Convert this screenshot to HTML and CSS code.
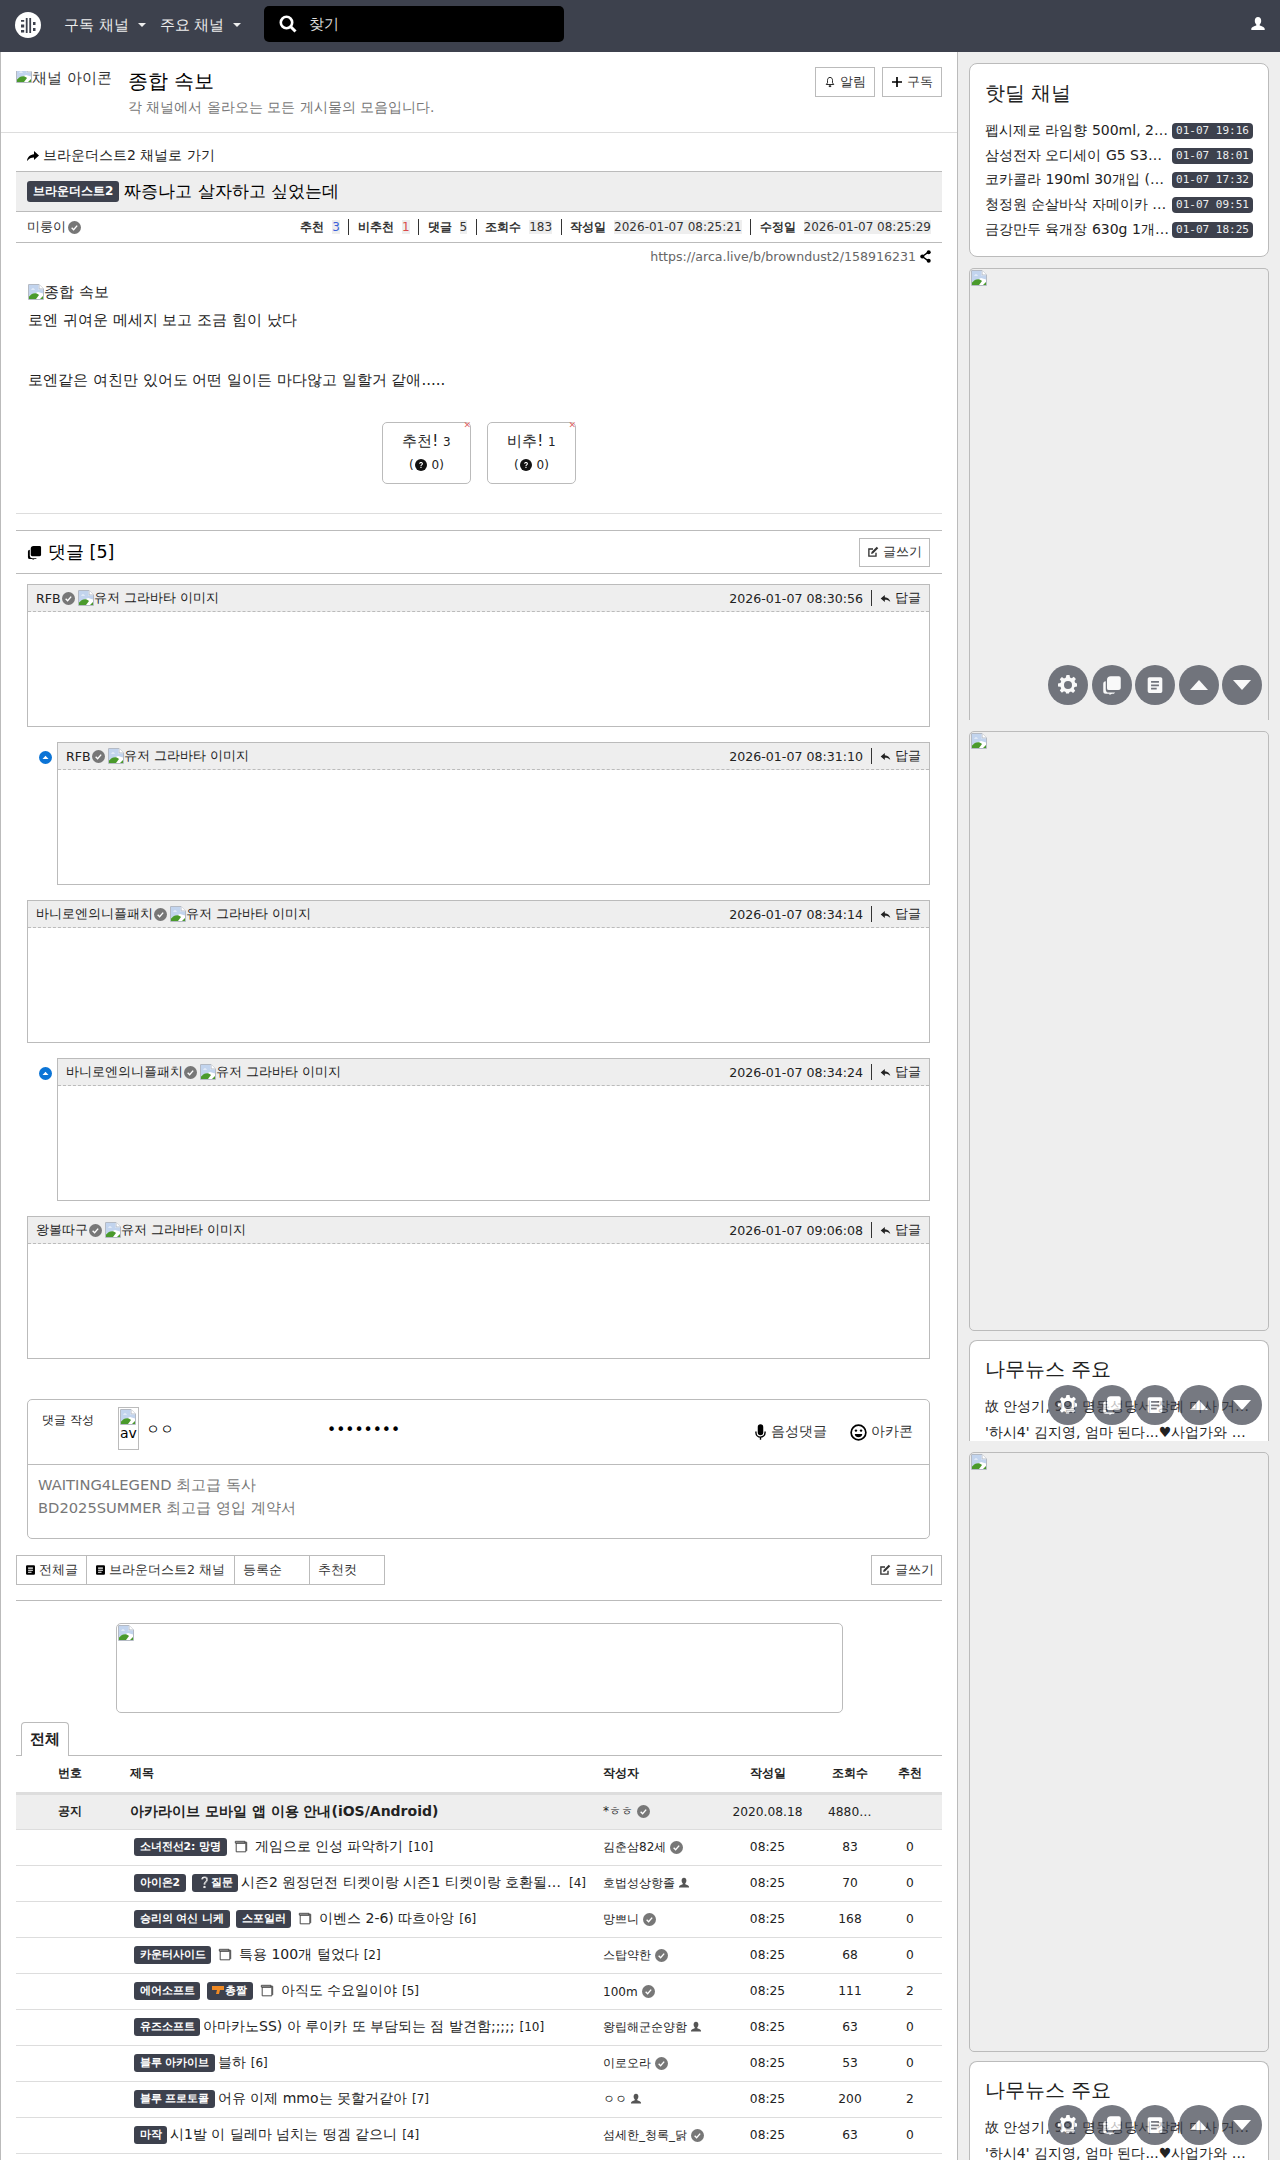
FILE: index.html
```html
<!DOCTYPE html>
<html lang="ko">
<head>
<meta charset="utf-8">
<title>짜증나고 살자하고 싶었는데</title>
<link rel="stylesheet" href="styles.css">
</head>
<body>
<svg class="defs" width="0" height="0">
  <symbol id="broken" viewBox="0 0 16 16">
    <path d="M.5.5h10.5l4.5 4.5v10.500H.5z" fill="#fff" stroke="#b4bac4"/>
    <path d="M11 .5v4.500h4.500" fill="#fff" stroke="#b4bac4"/>
    <path d="M1 1h9.500v4.500H15v4L10 8 1 12z" fill="#c2d4ee"/>
    <path d="M3 5.500c1-1.500 3-1.500 4 0z" fill="#fff"/>
    <path d="M1 15v-2.500C4 9 8 8 11 11l-3 4z" fill="#4a9a2c"/>
    <path d="M12 15l3-3v3z" fill="#4a9a2c"/>
  </symbol>
  <symbol id="check" viewBox="0 0 16 16">
    <circle cx="8" cy="8" r="8" fill="#777"/>
    <path d="M4.500 8.300l2.400 2.400 4.400-5" fill="none" stroke="#fff" stroke-width="1.700"/>
  </symbol>
  <symbol id="user" viewBox="0 0 16 16">
    <path d="M8 1c2 0 3.200 1.500 3.200 3.700 0 1.600-.7 3-1.500 3.700v1.200c2 .7 5 1.600 5 3.400v1H1.300v-1c0-1.800 3-2.700 5-3.400V8.400c-.8-.7-1.500-2.100-1.500-3.700C4.800 2.500 6 1 8 1z" fill="currentColor"/>
  </symbol>
  <symbol id="edit" viewBox="0 0 16 16">
    <path d="M12 9v4.500H2.500V4H8" fill="none" stroke="currentColor" stroke-width="1.800"/>
    <path d="M6 8l7-7 2 2-7 7-2.500.5z" fill="currentColor"/>
  </symbol>
  <symbol id="reply" viewBox="0 0 16 16">
    <path d="M7 3L1 8l6 5V9.800c3.500 0 6 .9 8 3.200-.5-4-3.500-6.500-8-7z" fill="currentColor"/>
  </symbol>
  <symbol id="doc" viewBox="0 0 16 16">
    <path d="M3 1h10a1.500 1.500 0 0 1 1.500 1.500v11A1.500 1.500 0 0 1 13 15H3a1.500 1.500 0 0 1-1.500-1.500v-11A1.500 1.500 0 0 1 3 1z" fill="currentColor"/>
    <path d="M4.500 4.500h7v1.500h-7zM4.500 7.500h7V9h-7zM4.500 10.500h5V12h-5z" fill="var(--ink,#fff)"/>
  </symbol>
  <symbol id="chats" viewBox="0 0 16 16">
    <path d="M7 1h6.500A1.500 1.500 0 0 1 15 2.500V10a2 2 0 0 1-2 2H5.500A1.500 1.500 0 0 1 4 10.500V4a3 3 0 0 1 3-3z" fill="currentColor"/>
    <path d="M3 5v6.500A2.500 2.500 0 0 0 5.500 14h5l-1 1H8l-2 1v-1H3a2 2 0 0 1-2-2V7a2 2 0 0 1 2-2z" fill="currentColor"/>
  </symbol>
  <symbol id="win" viewBox="0 0 16 16">
    <path d="M4.500 2.500h10v10" fill="none" stroke="#333" stroke-width="1"/>
    <path d="M1.500 1.500h11v2h-11zM2.500 3.500h11v10h-11z" fill="#fff" stroke="#333" stroke-width="1"/>
  </symbol>
  <symbol id="q" viewBox="0 0 16 16">
    <circle cx="8" cy="8" r="8" fill="#111"/>
    <path d="M5.500 6.200C5.500 4.800 6.600 4 8 4s2.600.8 2.600 2.200c0 1.800-2 1.800-2 3.300H7.200c0-2.200 1.900-2.300 1.900-3.300 0-.5-.5-.9-1.100-.9s-1.100.4-1.100.9zM7.200 10.500h1.500V12H7.200z" fill="#fff"/>
  </symbol>
</svg>

<header class="nav">
  <a class="logo">
    <svg viewBox="0 0 26 26" width="26" height="26">
      <circle cx="13" cy="13" r="13" fill="#fff"/>
      <path d="M10.800 6h1.800v15h-1.800zM14.300 6h1.800v15h-1.800z" fill="#3d414d"/>
      <path d="M6 8h3.200v1.800H6zM6 12.500h3.200v3H6zM6 18h3.200v2.500H6zM18 10h2.500v3H18zM18 16h2.500v3H18z" fill="#3d414d"/>
    </svg>
  </a>
  <a class="nav-link">구독 채널<i class="caret"></i></a>
  <a class="nav-link nav-link-2">주요 채널<i class="caret"></i></a>
  <div class="search">
    <svg class="search-icon" viewBox="0 0 18 18" width="18" height="18"><circle cx="7.500" cy="7.500" r="5.700" fill="none" stroke="#fff" stroke-width="2.600"/><path d="M11.500 11.500l5 5" stroke="#fff" stroke-width="3"/></svg>
    <span>찾기</span>
  </div>
  <svg class="nav-user" width="16" height="16"><use href="#user"/></svg>
</header>

<div class="layout">
  <main class="main">
    <section class="board-head">
      <div class="chan-icon"><svg class="bk" width="16" height="16"><use href="#broken"/></svg>채널 아이콘</div>
      <div class="board-text">
        <h1>종합 속보</h1>
        <p>각 채널에서 올라오는 모든 게시물의 모음입니다.</p>
      </div>
      <div class="board-btns">
        <a class="btn"><svg viewBox="0 0 12 14" width="10" height="12"><path d="M6 1.500c2 0 3 1.500 3 3.500v3l1.500 2h-9L3 8V5c0-2 1-3.500 3-3.500zM5 11.500h2v1H5z" fill="none" stroke="#000" stroke-width="1"/></svg>알림</a>
        <a class="btn"><svg viewBox="0 0 12 12" width="10" height="10"><path d="M5 0h2v5h5v2H7v5H5V7H0V5h5z" fill="#000"/></svg>구독</a>
      </div>
    </section>

    <section class="content">
      <a class="goto"><svg viewBox="0 0 12 10" width="12" height="10"><path d="M7 0l5 4.500L7 9V6.500C4 6.500 2 7.500 0 10c.5-4 3-6.500 7-6.800z" fill="#000"/></svg>브라운더스트2 채널로 가기</a>
      <div class="title-bar"><span class="badge">브라운더스트2</span><span class="title-text">짜증나고 살자하고 싶었는데</span></div>
      <div class="meta">
        <span class="author">미룽이<svg class="ck" width="13" height="13"><use href="#check"/></svg></span>
        <div class="stats">
          <b>추천</b><em class="up">3</em><i></i>
          <b>비추천</b><em class="down">1</em><i></i>
          <b>댓글</b><em>5</em><i></i>
          <b>조회수</b><em>183</em><i></i>
          <b>작성일</b><em>2026-01-07 08:25:21</em><i></i>
          <b>수정일</b><em>2026-01-07 08:25:29</em>
        </div>
      </div>
      <div class="url">https://arca.live/b/browndust2/158916231<svg viewBox="0 0 12 14" width="11" height="13"><path d="M9.500 2L2.500 7l7 5" fill="none" stroke="#000" stroke-width="1.500"/><circle cx="9.500" cy="2.300" r="2.200"/><circle cx="2.500" cy="7" r="2.200"/><circle cx="9.500" cy="11.700" r="2.200"/></svg></div>

      <article class="body">
        <div class="line"><svg class="bk" width="16" height="16"><use href="#broken"/></svg>종합 속보</div>
        <p class="line">로엔 귀여운 메세지 보고 조금 힘이 났다</p>
        <p class="line">&nbsp;</p>
        <p class="line">로엔같은 여친만 있어도 어떤 일이든 마다않고 일할거 같애.....</p>
      </article>

      <div class="votes">
        <div class="vote vote-up">
          <span class="x">✕</span>
          <div class="vote-main">추천! <small>3</small></div>
          <div class="vote-sub">(<svg width="12" height="12"><use href="#q"/></svg> 0)</div>
        </div>
        <div class="vote vote-down">
          <span class="x">✕</span>
          <div class="vote-main">비추! <small>1</small></div>
          <div class="vote-sub">(<svg width="12" height="12"><use href="#q"/></svg> 0)</div>
        </div>
      </div>
      <hr class="rule-light">

      <div class="cmt-title">
        <h2><svg viewBox="0 0 16 16" width="15" height="15"><use href="#chats"/></svg>댓글 [5]</h2>
        <a class="btn btn-write"><svg width="12" height="12"><use href="#edit"/></svg>글쓰기</a>
      </div>

      <div class="cmts">
        <div class="cmt">
          <div class="cmt-head"><span class="who">RFB<svg class="ck" width="13" height="13"><use href="#check"/></svg><svg class="bk bk-c" width="16" height="16"><use href="#broken"/></svg>유저 그라바타 이미지</span><span class="when">2026-01-07 08:30:56<i></i><svg width="11" height="11"><use href="#reply"/></svg>답글</span></div>
        </div>
        <div class="reply-row">
          <svg class="mark" viewBox="0 0 13 13" width="13" height="13"><circle cx="6.500" cy="6.500" r="6.500" fill="#0b74d6"/><path d="M3.500 8h6L6.500 4.800z" fill="#fff"/></svg>
          <div class="cmt">
            <div class="cmt-head"><span class="who">RFB<svg class="ck" width="13" height="13"><use href="#check"/></svg><svg class="bk bk-c" width="16" height="16"><use href="#broken"/></svg>유저 그라바타 이미지</span><span class="when">2026-01-07 08:31:10<i></i><svg width="11" height="11"><use href="#reply"/></svg>답글</span></div>
          </div>
        </div>
        <div class="cmt">
          <div class="cmt-head"><span class="who">바니로엔의니플패치<svg class="ck" width="13" height="13"><use href="#check"/></svg><svg class="bk bk-c" width="16" height="16"><use href="#broken"/></svg>유저 그라바타 이미지</span><span class="when">2026-01-07 08:34:14<i></i><svg width="11" height="11"><use href="#reply"/></svg>답글</span></div>
        </div>
        <div class="reply-row">
          <svg class="mark" viewBox="0 0 13 13" width="13" height="13"><circle cx="6.500" cy="6.500" r="6.500" fill="#0b74d6"/><path d="M3.500 8h6L6.500 4.800z" fill="#fff"/></svg>
          <div class="cmt">
            <div class="cmt-head"><span class="who">바니로엔의니플패치<svg class="ck" width="13" height="13"><use href="#check"/></svg><svg class="bk bk-c" width="16" height="16"><use href="#broken"/></svg>유저 그라바타 이미지</span><span class="when">2026-01-07 08:34:24<i></i><svg width="11" height="11"><use href="#reply"/></svg>답글</span></div>
          </div>
        </div>
        <div class="cmt">
          <div class="cmt-head"><span class="who">왕볼따구<svg class="ck" width="13" height="13"><use href="#check"/></svg><svg class="bk bk-c" width="16" height="16"><use href="#broken"/></svg>유저 그라바타 이미지</span><span class="when">2026-01-07 09:06:08<i></i><svg width="11" height="11"><use href="#reply"/></svg>답글</span></div>
        </div>
      </div>

      <form class="write">
        <div class="write-top">
          <span class="write-label">댓글 작성</span>
          <span class="avatar"><svg class="bk" width="16" height="16"><use href="#broken"/></svg>av</span>
          <span class="write-name">ㅇㅇ</span>
          <span class="write-pass">••••••••</span>
          <span class="write-tool write-voice"><svg viewBox="0 0 12 18" width="11" height="17"><path d="M3 3a3 3 0 0 1 6 0v6a3 3 0 0 1-6 0z" fill="#000"/><path d="M1 8v1a5 5 0 0 0 10 0V8M6 14v3" fill="none" stroke="#000" stroke-width="1.500"/></svg>음성댓글</span>
          <span class="write-tool"><svg viewBox="0 0 18 18" width="17" height="17"><circle cx="9" cy="9" r="7.800" fill="none" stroke="#000" stroke-width="1.800"/><circle cx="6.300" cy="7" r="1.300"/><circle cx="11.700" cy="7" r="1.300"/><path d="M5 10.500h8c-.3 2.300-2 3.500-4 3.500s-3.700-1.200-4-3.500z"/></svg>아카콘</span>
        </div>
        <div class="write-text">WAITING4LEGEND 최고급 독사<br>BD2025SUMMER 최고급 영입 계약서</div>
      </form>

      <div class="toolbar">
        <a class="tool tool-a"><svg class="ink" width="11" height="12"><use href="#doc"/></svg>전체글</a>
        <a class="tool tool-b"><svg class="ink" width="11" height="12"><use href="#doc"/></svg>브라운더스트2 채널</a>
        <span class="tool tool-c">등록순</span>
        <span class="tool tool-c">추천컷</span>
        <a class="btn btn-write tool-right"><svg width="12" height="12"><use href="#edit"/></svg>글쓰기</a>
      </div>
      <hr class="rule">

      <div class="ad"><svg class="bk-ad" width="16" height="16"><use href="#broken"/></svg></div>

      <div class="tabs"><span class="tab">전체</span></div>

      <table class="list">
        <colgroup><col class="c-no"><col class="c-title"><col class="c-author"><col class="c-date"><col class="c-view"><col class="c-rate"></colgroup>
        <thead><tr><th>번호</th><th class="ta-l">제목</th><th class="ta-l">작성자</th><th>작성일</th><th>조회수</th><th>추천</th></tr></thead>
        <tbody>
          <tr class="notice"><td class="no">공지</td><td class="t"><span class="notice-t">아카라이브 모바일 앱 이용 안내(iOS/Android)</span></td><td class="a"><span class="an">*ㅎㅎ</span><svg class="ck2" width="13" height="13"><use href="#check"/></svg></td><td>2020.08.18</td><td><span class="clip">4880000</span></td><td></td></tr>
          <tr><td></td><td class="t"><span class="badge sm">소녀전선2: 망명</span><svg class="w" width="14" height="14"><use href="#win"/></svg><span class="tt">게임으로 인성 파악하기</span><span class="n">[10]</span></td><td class="a"><span class="an">김춘삼82세</span><svg class="ck2" width="13" height="13"><use href="#check"/></svg></td><td>08:25</td><td>83</td><td>0</td></tr>
          <tr><td></td><td class="t"><span class="badge sm">아이온2</span><span class="badge sm">❔질문</span><span class="tt tt-clip">시즌2 원정던전 티켓이랑 시즌1 티켓이랑 호환될까요 궁금합니다</span><span class="n n-far">[4]</span></td><td class="a"><span class="an">호법성상항졸</span><svg class="u" width="12" height="12"><use href="#user"/></svg></td><td>08:25</td><td>70</td><td>0</td></tr>
          <tr><td></td><td class="t"><span class="badge sm">승리의 여신 니케</span><span class="badge sm">스포일러</span><svg class="w" width="14" height="14"><use href="#win"/></svg><span class="tt">이벤스 2-6) 따흐아앙</span><span class="n">[6]</span></td><td class="a"><span class="an">망쁘니</span><svg class="ck2" width="13" height="13"><use href="#check"/></svg></td><td>08:25</td><td>168</td><td>0</td></tr>
          <tr><td></td><td class="t"><span class="badge sm">카운터사이드</span><svg class="w" width="14" height="14"><use href="#win"/></svg><span class="tt">특용 100개 털었다</span><span class="n">[2]</span></td><td class="a"><span class="an">스탑약한</span><svg class="ck2" width="13" height="13"><use href="#check"/></svg></td><td>08:25</td><td>68</td><td>0</td></tr>
          <tr><td></td><td class="t"><span class="badge sm">에어소프트</span><span class="badge sm"><svg class="gun" viewBox="0 0 12 10" width="12" height="10"><path d="M0 1h12v4H8L7 9H4l1-4H0z" fill="#f08a24"/></svg>총짤</span><svg class="w" width="14" height="14"><use href="#win"/></svg><span class="tt">아직도 수요일이야</span><span class="n">[5]</span></td><td class="a"><span class="an">100m</span><svg class="ck2" width="13" height="13"><use href="#check"/></svg></td><td>08:25</td><td>111</td><td>2</td></tr>
          <tr><td></td><td class="t"><span class="badge sm">유즈소프트</span><span class="tt tt-tight">아마카노SS) 아 루이카 또 부담되는 점 발견함;;;;;</span><span class="n">[10]</span></td><td class="a"><span class="an">왕립해군순양함</span><svg class="u" width="12" height="12"><use href="#user"/></svg></td><td>08:25</td><td>63</td><td>0</td></tr>
          <tr><td></td><td class="t"><span class="badge sm">블루 아카이브</span><span class="tt tt-tight">블하</span><span class="n">[6]</span></td><td class="a"><span class="an">이로오라</span><svg class="ck2" width="13" height="13"><use href="#check"/></svg></td><td>08:25</td><td>53</td><td>0</td></tr>
          <tr><td></td><td class="t"><span class="badge sm">블루 프로토콜</span><span class="tt tt-tight">어유 이제 mmo는 못할거같아</span><span class="n">[7]</span></td><td class="a"><span class="an">ㅇㅇ</span><svg class="u" width="12" height="12"><use href="#user"/></svg></td><td>08:25</td><td>200</td><td>2</td></tr>
          <tr><td></td><td class="t"><span class="badge sm">마작</span><span class="tt tt-tight">시1발 이 딜레마 넘치는 떵겜 같으니</span><span class="n">[4]</span></td><td class="a"><span class="an">섬세한_청록_닭</span><svg class="ck2" width="13" height="13"><use href="#check"/></svg></td><td>08:25</td><td>63</td><td>0</td></tr>
        </tbody>
      </table>
    </section>
  </main>

  <aside class="side">
    <div class="card card-deal">
      <h3>핫딜 채널</h3>
      <div class="deal"><span class="deal-t">펩시제로 라임향 500ml, 24개입 무료배송</span><span class="time">01-07 19:16</span></div>
      <div class="deal"><span class="deal-t">삼성전자 오디세이 G5 S32DG500 게이밍</span><span class="time">01-07 18:01</span></div>
      <div class="deal"><span class="deal-t">코카콜라 190ml 30개입 (1개당 가격)</span><span class="time">01-07 17:32</span></div>
      <div class="deal"><span class="deal-t">청정원 순살바삭 자메이카 저크 치킨 팝콘</span><span class="time">01-07 09:51</span></div>
      <div class="deal"><span class="deal-t">금강만두 육개장 630g 1개 외 무료배송</span><span class="time">01-07 18:25</span></div>
    </div>
    <div class="ad-side ad-1"><svg class="bk-side" width="16" height="16"><use href="#broken"/></svg></div>
    <div class="ad-side ad-2"><svg class="bk-side" width="16" height="16"><use href="#broken"/></svg></div>
    <div class="card card-news">
      <h3>나무뉴스 주요</h3>
      <div class="news">故 안성기, 9일 명동성당서 장례 미사 거행 예정입니다</div>
      <div class="news">'하시4' 김지영, 엄마 된다...♥사업가와 결혼 후 임신 소식</div>
    </div>
    <div class="ad-side ad-2"><svg class="bk-side" width="16" height="16"><use href="#broken"/></svg></div>
    <div class="card card-news card-last">
      <h3>나무뉴스 주요</h3>
      <div class="news">故 안성기, 9일 명동성당서 장례 미사 거행 예정입니다</div>
      <div class="news">'하시4' 김지영, 엄마 된다...♥사업가와 결혼 후 임신 소식</div>
    </div>
  </aside>
</div>

<div class="fabs fabs-1">
  <a class="fab"><svg viewBox="0 0 20 20" width="20" height="20"><path d="M8.500 1h3l.5 2.500 1.700.7 2.100-1.400 2.100 2.100-1.400 2.100.7 1.700L19 9.500v3l-2.500.5-.7 1.700 1.400 2.100-2.100 2.100-2.100-1.400-1.700.7-.3 1.300h-3L7.700 18l-1.700-.7-2.100 1.400-2.100-2.100 1.400-2.100-.7-1.700L0 12.500v-3L2.500 9l.7-1.700L1.800 5.200l2.100-2.100L6 4.500l1.700-.7zM10 7a4 4 0 1 0 0 8 4 4 0 0 0 0-8z" fill="#fff" fill-rule="evenodd" transform="translate(0 -1)"/></svg></a>
  <a class="fab"><svg width="20" height="20"><use href="#chats"/></svg></a>
  <a class="fab fab-doc"><svg width="18" height="20"><use href="#doc"/></svg></a>
  <a class="fab"><svg viewBox="0 0 20 12" width="20" height="12"><path d="M10 1l9 10H1z" fill="#fff"/></svg></a>
  <a class="fab"><svg viewBox="0 0 20 12" width="20" height="12"><path d="M10 11L1 1h18z" fill="#fff"/></svg></a>
</div>
<div class="fabs fabs-2">
  <a class="fab"><svg viewBox="0 0 20 20" width="20" height="20"><path d="M8.500 1h3l.5 2.500 1.700.7 2.100-1.400 2.100 2.100-1.400 2.100.7 1.700L19 9.500v3l-2.500.5-.7 1.700 1.400 2.100-2.100 2.100-2.100-1.400-1.700.7-.3 1.300h-3L7.700 18l-1.700-.7-2.100 1.400-2.100-2.100 1.400-2.100-.7-1.700L0 12.500v-3L2.500 9l.7-1.700L1.800 5.200l2.100-2.100L6 4.500l1.700-.7zM10 7a4 4 0 1 0 0 8 4 4 0 0 0 0-8z" fill="#fff" fill-rule="evenodd" transform="translate(0 -1)"/></svg></a>
  <a class="fab"><svg width="20" height="20"><use href="#chats"/></svg></a>
  <a class="fab fab-doc"><svg width="18" height="20"><use href="#doc"/></svg></a>
  <a class="fab"><svg viewBox="0 0 20 12" width="20" height="12"><path d="M10 1l9 10H1z" fill="#fff"/></svg></a>
  <a class="fab"><svg viewBox="0 0 20 12" width="20" height="12"><path d="M10 11L1 1h18z" fill="#fff"/></svg></a>
</div>
<div class="fabs fabs-3">
  <a class="fab"><svg viewBox="0 0 20 20" width="20" height="20"><path d="M8.500 1h3l.5 2.500 1.700.7 2.100-1.400 2.100 2.100-1.400 2.100.7 1.700L19 9.500v3l-2.500.5-.7 1.700 1.400 2.100-2.100 2.100-2.100-1.400-1.700.7-.3 1.300h-3L7.700 18l-1.700-.7-2.100 1.400-2.100-2.100 1.400-2.100-.7-1.700L0 12.500v-3L2.500 9l.7-1.700L1.800 5.200l2.100-2.100L6 4.500l1.700-.7zM10 7a4 4 0 1 0 0 8 4 4 0 0 0 0-8z" fill="#fff" fill-rule="evenodd" transform="translate(0 -1)"/></svg></a>
  <a class="fab"><svg width="20" height="20"><use href="#chats"/></svg></a>
  <a class="fab fab-doc"><svg width="18" height="20"><use href="#doc"/></svg></a>
  <a class="fab"><svg viewBox="0 0 20 12" width="20" height="12"><path d="M10 1l9 10H1z" fill="#fff"/></svg></a>
  <a class="fab"><svg viewBox="0 0 20 12" width="20" height="12"><path d="M10 11L1 1h18z" fill="#fff"/></svg></a>
</div>
</body>
</html>
```
FILE: styles.css
```css
* { box-sizing: border-box; }
html, body { margin: 0; height: 2160px; overflow: hidden; }
body { position: relative; font-family: "DejaVu Sans", sans-serif; font-size: 14px; color: #000; background: #eee; }
.defs { position: absolute; }
h1, h2, h3, p { margin: 0; font-weight: 400; }
svg { flex: none; }

/* nav */
.nav { height: 52px; background: #3d414d; display: flex; align-items: center; padding-left: 15px; color: #fff; }
.logo { display: block; width: 26px; height: 26px; margin-top: -2px; }
.nav-link { color: #eee; font-size: 14.600px; margin-left: 23px; display: flex; align-items: center; margin-top: -2px; }
.nav-link-2 { margin-left: 14px; }
.caret { display: block; margin-left: 9px; border: 4px solid transparent; border-top-color: #eee; border-bottom: 0; }
.search { width: 300px; height: 36px; margin-left: 23px; margin-top: -4px; background: #000; border-radius: 5px; display: flex; align-items: center; padding-left: 15px; font-size: 14.700px; color: #ddd; }
.search-icon { margin-right: 12px; }
.nav-user { margin-left: auto; margin-right: 14px; margin-top: -4px; color: #fff; }

/* layout */
.layout { display: flex; height: 2108px; }
.main { width: 958px; background: #fff; border-left: 1px solid #bbb; border-right: 1px solid #bbb; overflow: hidden; }
.side { width: 322px; padding: 11px 11px 0 11px; }

/* board head */
.board-head { height: 81px; display: flex; padding: 15px 15px 0; border-bottom: 1px solid #ddd; }
.chan-icon { width: 95px; height: 20px; margin-top: 4px; overflow: hidden; white-space: nowrap; font-size: 14.700px; line-height: 14px; color: #333; display: flex; align-items: flex-start; }
.chan-icon .bk { margin-top: -4px; }
.bk { flex: none; }
.board-text { margin-left: 17px; flex: 1; }
.board-text h1 { font-size: 19.600px; line-height: 30px; }
.board-text p { font-size: 13.860px; line-height: 20px; color: #777; }
.board-btns { display: flex; gap: 7px; }
.btn { height: 30px; padding: 0 8.500px; border: 1px solid #bbb; background: #fff; display: inline-flex; align-items: center; gap: 5px; font-size: 12.600px; color: #333; }

/* content */
.content { padding: 0 15px; }
.goto { display: flex; align-items: center; gap: 4px; height: 38px; padding: 8px 0 0 11px; font-size: 14px; color: #222; }
.title-bar { height: 41px; border-top: 1px solid #bbb; border-bottom: 1px solid #bbb; background: #eee; padding-left: 11px; display: flex; align-items: center; gap: 5px; }
.badge { display: inline-block; background: #3d414d; color: #fff; font-weight: 700; font-size: 12px; line-height: 21px; padding: 0 6px; border-radius: 3px; white-space: nowrap; }
.title-text { font-size: 16.600px; }
.meta { height: 31px; border-bottom: 1px solid #bbb; display: flex; justify-content: space-between; align-items: center; padding: 0 11px; font-size: 13.300px; color: #333; }
.author { display: flex; align-items: center; gap: 1px; }
.ck { margin-left: 1px; }
.stats { display: flex; align-items: center; font-size: 12px; }
.stats b { margin-right: 8px; }
.stats em { font-style: normal; background: #eee; padding: 0; }
.stats .up { color: #3b5fd9; }
.stats .down { color: #d94b4b; }
.stats i { width: 1px; height: 16px; background: #333; margin: 0 8.500px; }
.url { height: 27px; display: flex; justify-content: flex-end; align-items: center; gap: 4px; padding-right: 11px; font-size: 12.600px; color: #666; }
.body { padding: 12px 0 0 12px; font-size: 15px; color: #222; }
.line { line-height: 30px; height: 30px; display: flex; align-items: center; }
.line:first-child { height: 20px; line-height: 20px; margin-bottom: 3px; }
.votes { display: flex; justify-content: center; gap: 16px; padding-top: 27px; height: 118px; }
.vote { position: relative; width: 89px; height: 62px; border: 1px solid #bbb; border-radius: 5px; text-align: center; color: #222; }
.vote-main { font-size: 15px; line-height: 22px; margin-top: 7px; }
.vote-main small { font-size: 12px; }
.vote-sub { font-size: 12px; display: flex; justify-content: center; align-items: center; gap: 1px; margin-top: 3px; height: 18px; white-space: pre; }
.x { position: absolute; top: -2px; right: -1px; font-size: 9px; line-height: 9px; color: #e06a6a; }
.rule-light { margin: 0; border: 0; border-top: 1px solid #ddd; }
.cmt-title { margin-top: 16px; height: 44px; border-top: 1px solid #bbb; border-bottom: 1px solid #bbb; display: flex; align-items: center; justify-content: space-between; padding: 0 12px 0 11px; }
.cmt-title h2 { display: flex; align-items: center; gap: 6px; font-size: 17.500px; }
.btn-write { height: 29px; gap: 4px; padding: 0 7px; }

.cmts { padding: 10px 12px 0 11px; }
.cmt { height: 143px; margin-bottom: 15px; border: 1px solid #bbb; flex: 1; background: #fff; }
.cmt-head { height: 27px; background: #eee; border-bottom: 1px dashed #bbb; display: flex; justify-content: space-between; align-items: center; padding: 0 8px; font-size: 12.600px; color: #222; }
.who, .when { display: flex; align-items: center; }
.bk-c { margin: 0 0 0 3px; }
.when i { width: 1px; height: 16px; background: #333; margin: 0 8px; }
.when svg { margin-right: 4px; }
.reply-row { display: flex; }
.mark { margin: 9px 5px 0 12px; }
.cmts > .cmt:last-child { margin-bottom: 0; }

.write { margin: 40px 12px 0 11px; height: 140px; border: 1px solid #bbb; border-radius: 5px; }
.write-top { height: 65px; border-bottom: 1px solid #bbb; display: flex; align-items: flex-start; font-size: 13px; position: relative; }
.write-label { margin: 12px 0 0 14px; font-size: 12px; color: #222; width: 76px; white-space: nowrap; }
.avatar { width: 21px; height: 43px; margin-top: 7px; border: 1px solid #bbb; overflow: hidden; display: block; font-size: 14px; line-height: 16px; padding: 1px 0 0 1px; }
.avatar .bk { display: block; }
.write-name { margin: 21px 0 0 7px; font-size: 14px; width: 181px; }
.write-pass { margin: 21px 0 0 0; font-size: 15.500px; }
.write-voice { margin-left: auto; }
.write-tool { display: flex; align-items: center; gap: 5px; font-size: 13.600px; color: #333; margin-top: 23px; margin-right: 23px; }
.write-tool:last-child { gap: 4px; margin-right: 16px; }
.write-text { padding: 8px 10px; font-size: 14.700px; line-height: 23px; color: #777; }

.toolbar { margin-top: 16px; display: flex; height: 30px; align-items: flex-start; }
.tool { height: 30px; border: 1px solid #bbb; display: flex; align-items: center; font-size: 12.600px; margin-left: -1px; padding-left: 8px; gap: 3px; color: #333; white-space: nowrap; }
.tool:first-child { margin-left: 0; }
.tool-a { width: 71px; }
.tool-b { width: 149px; }
.tool-c { width: 76px; font-size: 13.300px; }
.tool-right { margin-left: auto; height: 30px; width: 71px; }
.ink { color: #000; }
.rule { margin: 15px 0 0; border: 0; border-top: 1px solid #bbb; }
.ad { margin: 22px auto 0; width: 727px; height: 90px; border: 1px solid #bbb; border-radius: 5px; padding: 1px; }
.bk-ad, .bk-side { display: block; }

.tabs { height: 43px; border-bottom: 1px solid #bbb; padding: 9px 0 0 5px; }
.tab { display: inline-block; width: 48px; height: 34px; border: 1px solid #bbb; border-bottom: 0; border-radius: 4px 4px 0 0; background: #fff; font-size: 14.700px; font-weight: 700; text-align: center; line-height: 32px; position: relative; z-index: 1; color: #222; }

.list { width: 926px; table-layout: fixed; border-collapse: collapse; font-size: 12.250px; color: #222; }
.c-no { width: 108px; } .c-title { width: 473px; } .c-author { width: 116px; } .c-date { width: 109px; } .c-view { width: 56px; } .c-rate { width: 64px; }
.list th { height: 37px; font-size: 12px; font-weight: 700; text-align: center; border-bottom: 3px solid #ddd; padding: 0 6px; }
.list th.ta-l { text-align: left; }
.list td { height: 36px; padding: 0 6px; border-bottom: 1px solid #ddd; text-align: center; white-space: nowrap; overflow: hidden; }
.list .notice td { background: #eee; }
.list td.no { font-weight: 700; font-size: 11.500px; }
.list td.t { text-align: left; font-size: 14px; }
.list td.a { text-align: left; font-size: 12px; }
.notice-t { font-weight: 700; font-size: 14px; }
.clip { display: block; overflow: hidden; text-overflow: ellipsis; }
.sm { font-size: 10.800px; line-height: 18px; height: 18px; padding: 0 5.500px; margin-left: 4px; vertical-align: middle; }
.sm + .sm { margin-left: 6.500px; }
.w { margin: 0 7px 0 7px; vertical-align: middle; }
.tt { vertical-align: middle; }
.tt-tight { margin-left: 3px; }
.tt-clip { display: inline-block; width: 321px; overflow: hidden; text-overflow: ellipsis; margin-left: 3px; }
.n { margin-left: 5px; font-size: 12px; vertical-align: middle; }
.n-far { margin-left: 7px; }
.an, .ck2, .u { vertical-align: middle; }
.ck2 { margin-left: 4px; }
.u { margin-left: 3px; color: #555; }
.gun { margin-right: 1px; vertical-align: -1px; }

/* side */
.card { background: #fff; border: 1px solid #bbb; border-radius: 8px; padding: 18px 15px 0; overflow: hidden; }
.card h3 { font-size: 19.600px; line-height: 24px; margin-bottom: 13px; color: #222; }
.card-deal { height: 194px; margin-bottom: 11px; }
.deal { display: flex; justify-content: space-between; align-items: center; height: 24.600px; gap: 2px; }
.deal-t { flex: 1; min-width: 0; overflow: hidden; text-overflow: ellipsis; white-space: nowrap; font-size: 14px; color: #222; }
.time { flex: none; width: 81px; height: 16px; background: #3d414d; color: #eee; border-radius: 4px; font-family: "DejaVu Sans Mono", monospace; font-size: 11px; line-height: 16px; text-align: center; }
.ad-side { border: 1px solid #bbb; border-radius: 5px; padding: 1px; background: #eee; }
.ad-1 { height: 452px; margin-bottom: 11px; border-bottom: 0; border-radius: 5px 5px 0 0; }
.ad-2 { height: 600px; margin-bottom: 9px; }
.card-news { height: 101px; padding-top: 17px; border-bottom: 0; border-radius: 8px 8px 0 0; margin-bottom: 11px; }
.card-news h3 { margin-bottom: 11px; }
.news { font-size: 14px; line-height: 26px; white-space: nowrap; overflow: hidden; text-overflow: ellipsis; color: #222; }
.card-last { height: 120px; margin-bottom: 0; }

/* floating buttons */
.fabs { position: absolute; right: 18px; display: flex; gap: 3.500px; }
.fabs-1 { top: 665px; }
.fabs-2 { top: 1385px; }
.fabs-3 { top: 2105px; }
.fab { width: 40px; height: 40px; border-radius: 50%; background: #3d414d; opacity: .7; display: flex; align-items: center; justify-content: center; color: #fff; --ink: #3d414d; }
```
